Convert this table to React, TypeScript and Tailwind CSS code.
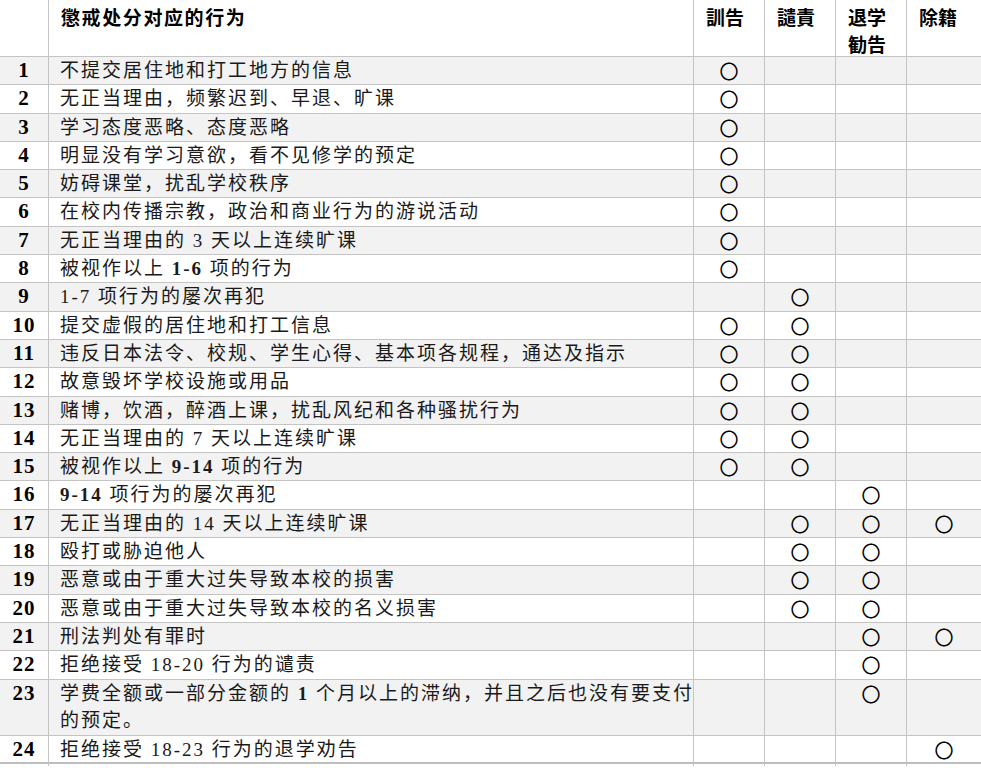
const rows: { n: number; text: React.ReactNode; marks: number[]; tall?: boolean }[] = [
  { n: 1, text: "不提交居住地和打工地方的信息", marks: [1, 0, 0, 0] },
  { n: 2, text: "无正当理由，频繁迟到、早退、旷课", marks: [1, 0, 0, 0] },
  { n: 3, text: "学习态度恶略、态度恶略", marks: [1, 0, 0, 0] },
  { n: 4, text: "明显没有学习意欲，看不见修学的预定", marks: [1, 0, 0, 0] },
  { n: 5, text: "妨碍课堂，扰乱学校秩序", marks: [1, 0, 0, 0] },
  { n: 6, text: "在校内传播宗教，政治和商业行为的游说活动", marks: [1, 0, 0, 0] },
  { n: 7, text: "无正当理由的 3 天以上连续旷课", marks: [1, 0, 0, 0] },
  {
    n: 8,
    text: (
      <>
        被视作以上 <b className="font-bold">1‐6</b> 项的行为
      </>
    ),
    marks: [1, 0, 0, 0],
  },
  { n: 9, text: "1‐7 项行为的屡次再犯", marks: [0, 1, 0, 0] },
  { n: 10, text: "提交虚假的居住地和打工信息", marks: [1, 1, 0, 0] },
  { n: 11, text: "违反日本法令、校规、学生心得、基本项各规程，通达及指示", marks: [1, 1, 0, 0] },
  { n: 12, text: "故意毁坏学校设施或用品", marks: [1, 1, 0, 0] },
  { n: 13, text: "赌博，饮酒，醉酒上课，扰乱风纪和各种骚扰行为", marks: [1, 1, 0, 0] },
  { n: 14, text: "无正当理由的 7 天以上连续旷课", marks: [1, 1, 0, 0] },
  {
    n: 15,
    text: (
      <>
        被视作以上 <b className="font-bold">9‐14</b> 项的行为
      </>
    ),
    marks: [1, 1, 0, 0],
  },
  {
    n: 16,
    text: (
      <>
        <b className="font-bold">9‐14</b> 项行为的屡次再犯
      </>
    ),
    marks: [0, 0, 1, 0],
  },
  { n: 17, text: "无正当理由的 14 天以上连续旷课", marks: [0, 1, 1, 1] },
  { n: 18, text: "殴打或胁迫他人", marks: [0, 1, 1, 0] },
  { n: 19, text: "恶意或由于重大过失导致本校的损害", marks: [0, 1, 1, 0] },
  { n: 20, text: "恶意或由于重大过失导致本校的名义损害", marks: [0, 1, 1, 0] },
  { n: 21, text: "刑法判处有罪时", marks: [0, 0, 1, 1] },
  { n: 22, text: "拒绝接受 18‐20 行为的谴责", marks: [0, 0, 1, 0] },
  {
    n: 23,
    text: (
      <>
        学费全额或一部分金额的 <b className="font-bold">1</b> 个月以上的滞纳，并且之后也没有要支付
        <br />
        的预定。
      </>
    ),
    marks: [0, 0, 1, 0],
    tall: true,
  },
  { n: 24, text: "拒绝接受 18‐23 行为的退学劝告", marks: [0, 0, 0, 1] },
];

const cols = "grid grid-cols-[49px_645px_71px_71px_71px_1fr]";
const font = { fontFamily: '"Liberation Serif", "Noto Sans CJK SC", serif' };

const Mark = () => (
  <span className="text-[19px] leading-[28px] text-black" style={{ fontFamily: '"Noto Sans CJK JP", sans-serif' }}>
    〇
  </span>
);

export default function App() {
  return (
    <div className="w-[981px] h-[768px] overflow-hidden bg-white text-[#1a1a1a]" style={font}>
      <div className={`${cols} h-[57px] border-b border-[#c4c4c4]`}>
        <div className="border-r border-[#c4c4c4]" />
        <div
          className="border-r border-[#c4c4c4] pl-[12px] pt-[3px] text-[19px] leading-[27px] font-bold tracking-[1.6px] text-black"
          style={{ fontFamily: '"Noto Sans CJK SC", sans-serif' }}
        >
          懲戒处分对应的行为
        </div>
        {[["訓告"], ["譴責"], ["退学", "勧告"], ["除籍"]].map((h, i) => (
          <div
            key={i}
            className={`${i < 3 ? "border-r border-[#c4c4c4]" : ""} pl-[12px] pt-[3px] text-[19px] leading-[27px] font-bold text-black`}
            style={{ fontFamily: '"Noto Sans CJK JP", sans-serif' }}
          >
            {h.map((t) => (
              <div key={t}>{t}</div>
            ))}
          </div>
        ))}
      </div>
      {rows.map((r) => (
        <div
          key={r.n}
          className={`${cols} ${r.tall ? "h-[56px]" : "h-[28.3px]"} border-b ${r.n === 24 ? "border-b-[2px] border-[#bdbdbd]" : "border-[#c4c4c4]"} ${r.n % 2 === 1 ? "bg-[#f2f2f2]" : "bg-white"}`}
        >
          <div className="border-r border-[#c4c4c4] text-center text-[21px] leading-[27px] font-bold tracking-[1px] text-black">
            {r.n}
          </div>
          <div className="border-r border-[#c4c4c4] pl-[11px] text-[19px] leading-[27px] tracking-[2px] whitespace-nowrap">
            {r.text}
          </div>
          {r.marks.map((m, i) => (
            <div key={i} className={`${i < 3 ? "border-r border-[#c4c4c4]" : ""} text-center leading-[27px]`}>
              {m ? <Mark /> : null}
            </div>
          ))}
        </div>
      ))}
    </div>
  );
}
